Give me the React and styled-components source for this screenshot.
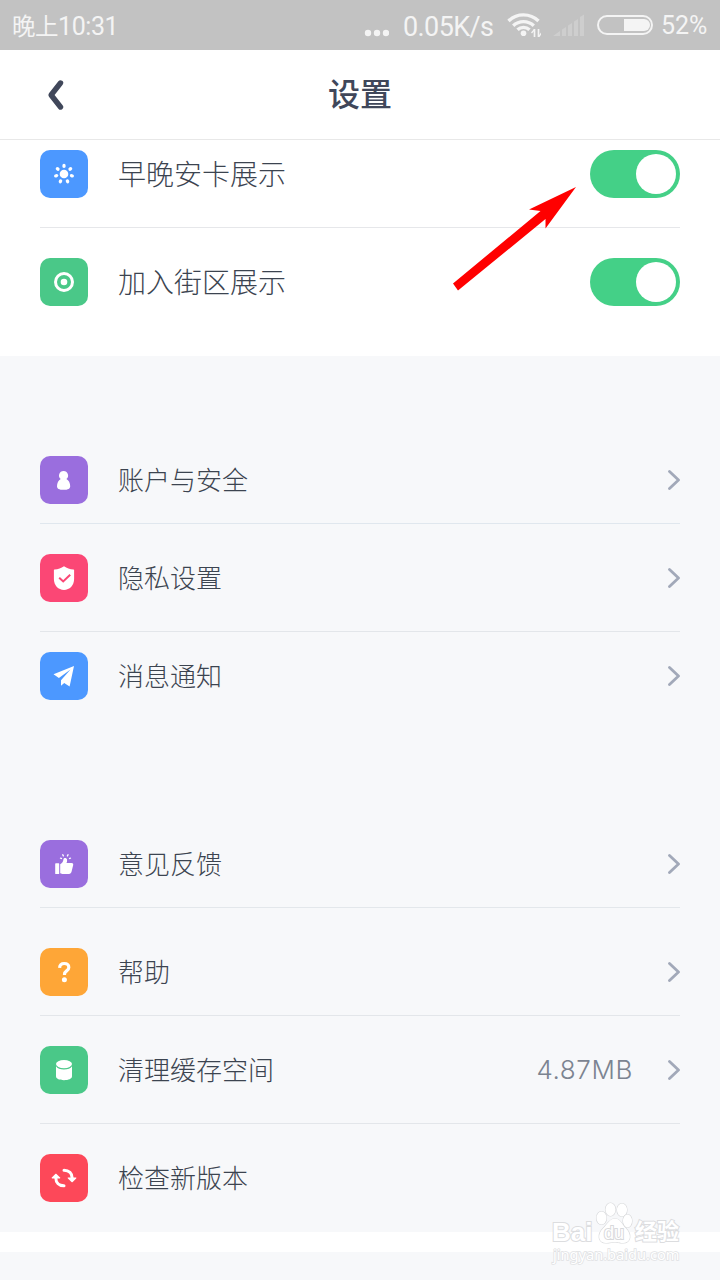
import React from "react";
import styled, { createGlobalStyle } from "styled-components";

const GlobalStyle = createGlobalStyle`
    body {
        margin: 0;
        background: #f7f8fa;
        font-family: "Noto Sans CJK SC", sans-serif;
    }
    * {
        box-sizing: border-box;
    }
    svg {
        display: block;
        flex-shrink: 0;
    }
`;
const Screen = styled.div`
    position: relative;
    width: 720px;
    height: 1280px;
    overflow: hidden;
    background: #f7f8fa;
`;
const StatusBar = styled.div`
    height: 50px;
    padding: 0 12px;
    display: flex;
    align-items: center;
    background: #c2c2c2;
    color: #f4f4f4;
    font-family: Roboto, "Noto Sans CJK SC", sans-serif;
    line-height: 50px;
    white-space: nowrap;
`;
const Clock = styled.div`
    flex: 1;
    display: flex;
    font-size: 25px;
    letter-spacing: -0.4px;
    padding-top: 3px;
`;
const Period = styled.span`
    width: 46px;
    font-size: 23.500px;
`;
const Speed = styled.div`
    width: 91px;
    margin: 3px 13px 0 14px;
    font-size: 27px;
    letter-spacing: -0.6px;
`;
const Percent = styled.div`
    width: 47px;
    margin: 2px 0 0 8px;
    font-size: 25px;
    letter-spacing: -0.1px;
`;
const Header = styled.div`
    height: 90px;
    display: grid;
    grid-template-columns: 120px 1fr 120px;
    align-items: center;
    background: #ffffff;
    border-bottom: 1px solid #e8e8e8;
`;
const BackButton = styled.div`
    padding-left: 46px;
`;
const Title = styled.div`
    padding-bottom: 5px;
    color: #40475a;
    font-size: 32px;
    font-weight: 500;
    line-height: 48px;
    text-align: center;
`;
const Section = styled.div`
    padding: 0 40px ${(props) => props.bottom || "0"};
    margin-top: ${(props) => props.top || "0"};
    background: ${(props) => props.bg || "#f7f8fa"};
`;
const Row = styled.div`
    height: ${(props) => props.height || "108px"};
    padding-top: ${(props) => props.pad || "30px"};
    display: flex;
    align-items: flex-start;
    border-bottom: 1px solid ${(props) => props.line || "transparent"};
`;
const IconBox = styled.div`
    width: 48px;
    height: 48px;
    border-radius: 10px;
    background: ${(props) => props.bg};
`;
const Label = styled.div`
    flex: 1;
    margin-left: 30px;
    color: #3c4450;
    font-size: ${(props) => props.size || "26px"};
    font-weight: 300;
    line-height: 46px;
`;
const Value = styled.div`
    margin-right: 34px;
    color: #7c8491;
    font-family: Inter, sans-serif;
    font-size: 26px;
    font-weight: 300;
    letter-spacing: 0.6px;
    line-height: 48px;
`;
const Switch = styled.div`
    width: 90px;
    height: 48px;
    padding: 4px;
    display: flex;
    justify-content: flex-end;
    border-radius: 24px;
    background: #44d087;
`;
const Knob = styled.div`
    width: 40px;
    height: 40px;
    border-radius: 50%;
    background: #ffffff;
`;
const Strip = styled.div`
    height: 20px;
    background: #ffffff;
`;
const Pointer = styled.svg`
    position: absolute;
    left: 440px;
    top: 180px;
`;
const Watermark = styled.div`
    position: absolute;
    left: 552px;
    top: 1202px;
    width: 130px;
    color: #ffffff;
    font-family: "Liberation Sans", sans-serif;
    paint-order: stroke;
    -webkit-text-stroke: 2px #dcdddf;
`;
const Brand = styled.div`
    height: 42px;
    display: flex;
    align-items: flex-end;
    font-weight: 700;
    white-space: nowrap;
`;
const BrandText = styled.div`
    width: ${(props) => props.width};
    font-family: "Liberation Sans", "Noto Sans CJK SC", sans-serif;
    font-size: ${(props) => props.size};
    line-height: 24px;
`;
const Paw = styled.div`
    width: 38px;
    height: 42px;
    margin-right: 2px;
    display: grid;
    & > * {
        grid-area: 1 / 1;
    }
`;
const PawText = styled.div`
    padding-top: 21px;
    color: #ffffff;
    font-size: 18px;
    font-weight: 400;
    line-height: 20px;
    text-align: center;
    -webkit-text-stroke: 2px #d8d9db;
`;
const Site = styled.div`
    padding: 2px 0 0 1px;
    font-family: "Noto Sans", sans-serif;
    font-size: 14.6px;
    line-height: 16px;
    white-space: nowrap;
    -webkit-text-stroke: 1.5px #e0e1e3;
`;

const icons = {
    sun: (
        <g>
            <circle cx="24" cy="24" r="4.3" />
            {[0, 1, 2, 3, 4, 5, 6].map((n) => (
                <ellipse
                    key={n}
                    cx="24"
                    cy="15.9"
                    rx="1.7"
                    ry="2.1"
                    transform={`rotate(${(n * 360) / 7} 24 24)`}
                />
            ))}
        </g>
    ),
    target: (
        <g>
            <circle cx="24" cy="24" r="8.5" fill="none" stroke="#fff" strokeWidth="3" />
            <circle cx="24" cy="24" r="3.3" />
        </g>
    ),
    user: (
        <path d="M23.5 15a4.500 4.500 0 0 1 2.900 8c2.300 1.200 3.800 4 3.800 7.200 0 2.500-2 3.600-6.600 3.600S17 32.700 17 30.200c0-3.200 1.500-6 3.700-7.200A4.500 4.500 0 0 1 23.500 15z" />
    ),
    shield: (
        <g>
            <path d="M24 12.200c2.800 2 5.800 3 9.500 3.200.5 0 .6.300.6.700V25c0 6.500-4.500 10.900-10.100 10.900S13.900 31.500 13.900 25v-8.900c0-.4.100-.7.600-.7 3.700-.2 6.700-1.200 9.500-3.200z" />
            <path d="M19.200 23.800l4 3.700 7-6.700" fill="none" stroke="#fb4775" strokeWidth="2" />
        </g>
    ),
    plane: (
        <path d="M34 14L13.500 22.300l5.400 3.700L30.500 17.600 21 28.300v5.500l3.200-2.800 5.400 3.600z" />
    ),
    thumb: (
        <g>
            <rect x="15.200" y="23.300" width="4" height="10.700" rx=".6" />
            <path d="M20.200 24.300c2.100-1 3-2.600 3.300-5.200.2-1.700 3.400-1.600 3.600.8.100 1.200-.2 2.300-.6 3.200h5c1.500 0 1.900.8 1.700 1.900l-1.600 6.500c-.4 1.600-1.200 2.500-2.700 2.500h-6.500l-2.200-.8z" />
            <path d="M22.500 14.200l1.100 2.200M28.300 14.200l-1.100 2.200M20 18l2 .7M31 18l-2 .7" fill="none" stroke="#fff" strokeWidth="1.300" />
        </g>
    ),
    help: (
        <g>
            <path d="M19.600 19.800c.2-2.900 2-4.300 4.600-4.300 2.800 0 4.600 1.500 4.600 3.900 0 3.600-4.300 3.300-4.300 6.800v.8" fill="none" stroke="#fff" strokeWidth="3.200" />
            <circle cx="24.400" cy="31.700" r="2.500" />
        </g>
    ),
    cache: (
        <g>
            <path d="M16 20.300c1.400 2.400 4.200 3.300 8 3.300s6.600-.9 8-3.300v10c0 2.500-3.500 3.900-8 3.900s-8-1.400-8-3.900z" />
            <ellipse cx="24" cy="18.100" rx="8" ry="4.200" />
        </g>
    ),
    refresh: (
        <g>
            <path d="M24 16.200c5 0 8.200 3.300 8.200 8M24 31.800c-5 0-8.200-3.300-8.200-8" fill="none" stroke="#fff" strokeWidth="3" strokeLinecap="round" />
            <path d="M28.200 23.600h7.600c.6 0 .7.500.4.900l-3.500 3.500c-.4.400-.8.400-1.200 0l-3.600-3.500c-.4-.4-.3-.9.300-.9zM19.800 24.400h-7.600c-.6 0-.7-.5-.4-.9l3.500-3.500c.4-.4.8-.4 1.200 0l3.600 3.500c.4.400.3.900-.3.900z" />
        </g>
    ),
};

const displayList = [
    { icon: "sun", color: "#4c98ff", text: "早晚安卡展示", height: "88px", pad: "10px", line: "#e6e7ea" },
    { icon: "target", color: "#4ac888", text: "加入街区展示" },
];
const accountList = [
    { icon: "user", color: "#9a6ede", text: "账户与安全", height: "88px", pad: "20px", line: "#e0e7ee" },
    { icon: "shield", color: "#fb4775", text: "隐私设置", line: "#e3e6ea" },
    { icon: "plane", color: "#4c98ff", text: "消息通知", height: "88px", pad: "20px" },
];
const otherList = [
    { icon: "thumb", color: "#9a6ede", text: "意见反馈", height: "88px", pad: "20px", line: "#e3e7eb" },
    { icon: "help", color: "#fea637", text: "帮助", pad: "40px", line: "#e3e6ea" },
    { icon: "cache", color: "#4ac888", text: "清理缓存空间", value: "4.87MB", line: "#e3e6ea" },
    { icon: "refresh", color: "#fd4859", text: "检查新版本", noArrow: true },
];

function Arrow() {
    return (
        <svg width="13" height="48" viewBox="0 0 13 48">
            <path d="M2.500 15.500l9 8.500-9 8.500" fill="none" stroke="#a2a9b9" strokeWidth="2.800" strokeLinecap="round" strokeLinejoin="round" />
        </svg>
    );
}

function Item({ item, toggle }) {
    return (
        <Row height={item.height} pad={item.pad} line={item.line}>
            <IconBox bg={item.color}>
                <svg width="48" height="48" fill="#fff">
                    {icons[item.icon]}
                </svg>
            </IconBox>
            <Label size={toggle && "28px"}>{item.text}</Label>
            {item.value && <Value>{item.value}</Value>}
            {toggle && (
                <Switch>
                    <Knob />
                </Switch>
            )}
            {!toggle && !item.noArrow && <Arrow />}
        </Row>
    );
}

function Status() {
    return (
        <StatusBar>
            <Clock>
                <Period>晚上</Period>
                10:31
            </Clock>
            <svg width="26" height="50" fill="#f4f4f4">
                <circle cx="5" cy="33" r="3.200" />
                <circle cx="14" cy="33" r="3.200" />
                <circle cx="23" cy="33" r="3.200" />
            </svg>
            <Speed>0.05K/s</Speed>
            <svg width="34" height="50" fill="none" stroke="#f4f4f4" strokeWidth="3.400">
                <path d="M1.500 21.500a21.500 21.500 0 0 1 30 0M6.200 26.300a14.800 14.800 0 0 1 20.600 0M10.500 30.300a8.700 8.700 0 0 1 12 0" transform="translate(0 -.5)" />
                <circle cx="16.500" cy="33.300" r="2.800" fill="#f4f4f4" stroke="none" />
                <path d="M27.500 29v8M31.500 29v8" strokeWidth="1.700" />
                <path d="M24.500 33l3-3.500M32 36.500l2.500-3.500" strokeWidth="1.300" />
            </svg>
            <svg width="56" height="50" fill="#cecece">
                <path d="M12 36l7-5v5zM21 29.500l4-2.500v9h-4zM27 25.500l4-2.500v13h-4zM33 21.500l4-2.500v17h-4zM39 17l4-2.500V36h-4z" />
            </svg>
            <svg width="56" height="50">
                <rect x="1" y="16" width="54" height="18" rx="9" fill="none" stroke="#f4f4f4" strokeWidth="2" />
                <path d="M27 19h20a6 6 0 0 1 0 12H27z" fill="#f4f4f4" />
            </svg>
            <Percent>52%</Percent>
        </StatusBar>
    );
}

function App() {
    return (
        <Screen>
            <GlobalStyle />
            <Status />
            <Header>
                <BackButton>
                    <svg width="20" height="34" viewBox="0 0 20 34">
                        <path d="M14.500 5l-9.400 12 9.400 12" fill="none" stroke="#40475a" strokeWidth="5.400" strokeLinecap="round" strokeLinejoin="round" />
                    </svg>
                </BackButton>
                <Title>设置</Title>
            </Header>
            <Section bg="#ffffff" bottom="20px">
                {displayList.map((item) => (
                    <Item key={item.text} item={item} toggle />
                ))}
            </Section>
            <Section top="80px">
                {accountList.map((item) => (
                    <Item key={item.text} item={item} />
                ))}
            </Section>
            <Section top="100px">
                {otherList.map((item) => (
                    <Item key={item.text} item={item} />
                ))}
            </Section>
            <Strip />
            <Pointer width="140" height="120" fill="#ff0000">
                <path d="M136 7L89 29.500l11.500 1.500L13 103.500l5 7L105.500 39v9.500z" />
            </Pointer>
            <Watermark>
                <Brand>
                    <BrandText width="43px" size="26px">Bai</BrandText>
                    <Paw>
                        <svg width="38" height="42" fill="#ffffff" stroke="#d8d9db" strokeWidth="1.200">
                            <ellipse cx="6.500" cy="16" rx="5" ry="6.500" />
                            <ellipse cx="15.500" cy="7.500" rx="5" ry="6.500" />
                            <ellipse cx="27" cy="8" rx="5" ry="6.500" />
                            <ellipse cx="32.500" cy="19" rx="4.500" ry="6.500" />
                            <path d="M20 16.500c5 0 7 6 11 10 6 6 5 14.500-3 14.500-4 0-5-1-8-1s-5 1-9 1c-8 0-9-8.500-3-14.500 4-4 7-10 12-10z" />
                        </svg>
                        <PawText>du</PawText>
                    </Paw>
                    <BrandText width="44px" size="22px">经验</BrandText>
                </Brand>
                <Site>jingyan.baidu.com</Site>
            </Watermark>
        </Screen>
    );
}

export default App;
